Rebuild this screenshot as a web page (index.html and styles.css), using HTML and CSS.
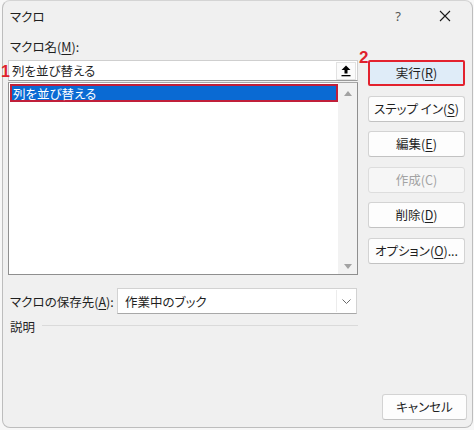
FILE: index.html
```html
<!DOCTYPE html>
<html lang="ja">
<head>
<meta charset="utf-8">
<link rel="stylesheet" href="styles.css">
</head>
<body>
<div class="window">
  <div class="titlebar">
    <span class="title">マクロ</span>
    <span class="help">?</span>
    <span class="close">
      <svg width="12" height="12" viewBox="0 0 12 12"><path d="M1 1L11 11M11 1L1 11" stroke="#1a1a1a" stroke-width="1.1" fill="none"/></svg>
    </span>
  </div>
  <div class="content">
    <div class="left">
      <div class="label">マクロ名(<u>M</u>):</div>
      <div class="name-input">
        <span class="name-text">列を並び替える</span>
        <span class="up-btn">
          <svg width="10" height="12" viewBox="0 0 10 12"><path d="M5 0.5L9.5 5H6.5V8.5H3.5V5H0.5Z" fill="#000"/><rect x="0.5" y="10" width="9" height="1.3" fill="#000"/></svg>
        </span>
        <span class="mark mark1">1</span>
      </div>
      <div class="listbox">
        <div class="items">
          <div class="item selected">列を並び替える</div>
        </div>
        <div class="scrollbar">
          <svg width="8" height="5" viewBox="0 0 8 5"><path d="M0 5L4 0L8 5Z" fill="#a3a3a3"/></svg>
          <svg width="8" height="5" viewBox="0 0 8 5"><path d="M0 0L4 5L8 0Z" fill="#a3a3a3"/></svg>
        </div>
      </div>
      <div class="save-row">
        <span class="save-label">マクロの保存先(<u>A</u>):</span>
        <div class="select">
          <span class="select-text">作業中のブック</span>
          <span class="chev">
            <svg width="9" height="5" viewBox="0 0 9 5"><path d="M0.5 0.5L4.5 4.5L8.5 0.5" stroke="#6a6a6a" stroke-width="1" fill="none"/></svg>
          </span>
        </div>
      </div>
      <div class="desc">
        <span>説明</span>
        <span class="desc-line"></span>
      </div>
    </div>
    <div class="right">
      <div class="btn run">実行(<u>R</u>)<span class="mark mark2">2</span></div>
      <div class="btn">ステップ イン(<u>S</u>)</div>
      <div class="btn">編集(<u>E</u>)</div>
      <div class="btn disabled">作成(C)</div>
      <div class="btn">削除(<u>D</u>)</div>
      <div class="btn">オプション(<u>O</u>)...</div>
    </div>
  </div>
  <div class="footer">
    <div class="btn cancel">キャンセル</div>
  </div>
</div>
</body>
</html>
```
FILE: styles.css
```css
* { box-sizing: border-box; }
html, body {
  margin: 0;
  padding: 0;
  background: #f7f7f7;
}
body {
  width: 474px;
  height: 430px;
  overflow: hidden;
  font-family: "Noto Sans CJK JP", "Noto Sans", sans-serif;
  font-size: 12.5px;
  font-feature-settings: "palt";
  color: #1f1f1f;
}
u { text-decoration-thickness: 1px; text-underline-offset: 2px; }
.window {
  margin-left: 2px;
  width: 471px;
  height: 428px;
  background: #f0f0f0;
  border: 1px solid #bdbdbd;
  border-top-color: #d4d4d4;
  border-radius: 8px;
  display: flex;
  flex-direction: column;
}
.titlebar {
  height: 29px;
  display: flex;
  align-items: center;
  padding-left: 7px;
}
.title { flex: 1; font-size: 12.5px; padding-top: 1px; }
.help {
  width: 12px;
  text-align: center;
  font-family: "Noto Sans", sans-serif;
  font-size: 13px;
  color: #555;
  margin-right: 35px;
}
.close { width: 12px; height: 12px; margin-right: 21px; display: flex; }
.content {
  display: flex;
  padding-left: 5px;
  gap: 10px;
}
.left { width: 350px; display: flex; flex-direction: column; }
.label {
  margin-top: 8px;
  height: 22px;
  line-height: 18px;
  padding-left: 2px;
}
.name-input {
  position: relative;
  height: 21px;
  background: #fff;
  border: 1px solid #cfcfcf;
  border-bottom-color: #9a9a9a;
  display: flex;
  align-items: center;
  padding-left: 3px;
}
.name-text { flex: 1; line-height: 18px; }
.up-btn {
  width: 20px;
  height: 18px;
  margin-right: 1px;
  display: flex;
  align-items: center;
  justify-content: center;
  background: #fbfbfb;
  border: 1px solid #e2e2e2;
}
.mark {
  position: absolute;
  color: #e0212c;
  font-family: "Liberation Sans", sans-serif;
  font-weight: bold;
  font-size: 16px;
  line-height: 16px;
}
.mark1 { left: -8px; top: 3px; }
.mark2 { left: -11px; top: -12px; font-size: 17px; }
.listbox {
  margin-top: 1px;
  height: 193px;
  background: #fff;
  border: 1px solid #8f8f8f;
  border-top-color: #a8a8a8;
  display: flex;
}
.items { flex: 1; padding: 1px 0 0 1px; }
.item {
  height: 18px;
  line-height: 15px;
  padding-left: 1px;
}
.item.selected {
  background: #0a6ad3;
  color: #fff;
  border: 2px solid #c01f3a;
}
.scrollbar {
  width: 19px;
  background: #f2f2f2;
  display: flex;
  flex-direction: column;
  align-items: center;
  justify-content: space-between;
  padding: 8px 0 5px 1px;
}
.save-row {
  margin-top: 13px;
  display: flex;
  align-items: center;
}
.save-label { width: 109px; padding-left: 2px; }
.select {
  width: 240px;
  height: 26px;
  background: #fff;
  border: 1px solid #d2d2d2;
  border-bottom-color: #a8a8a8;
  display: flex;
  align-items: center;
  padding-left: 7px;
}
.select-text { flex: 1; }
.chev {
  width: 19px;
  height: 22px;
  margin-right: 1px;
  display: flex;
  align-items: center;
  justify-content: center;
  border-left: 1px solid #ececec;
}
.desc {
  margin-top: 3px;
  display: flex;
  align-items: center;
  padding-left: 2px;
  height: 18px;
}
.desc-line {
  flex: 1;
  height: 1px;
  background: #dadada;
  margin-left: 7px;
  margin-top: -2px;
}
.right {
  width: 97px;
  padding-top: 30px;
  display: flex;
  flex-direction: column;
  gap: 9.5px;
}
.btn {
  position: relative;
  height: 26px;
  background: #fdfdfd;
  border: 1px solid #d3d3d3;
  border-bottom-color: #c2c2c2;
  border-radius: 3px;
  display: flex;
  align-items: center;
  justify-content: center;
  line-height: 16px;
}
.btn.run {
  background: #dfecf8;
  border: 2px solid #e3222e;
  border-radius: 2px;
}
.btn.disabled { color: #a3a3a3; background: #f6f6f6; border-color: #dddddd; }
.footer {
  margin-top: auto;
  display: flex;
  justify-content: flex-end;
  padding: 0 5px 7px 0;
}
.cancel { width: 85px; }
```
